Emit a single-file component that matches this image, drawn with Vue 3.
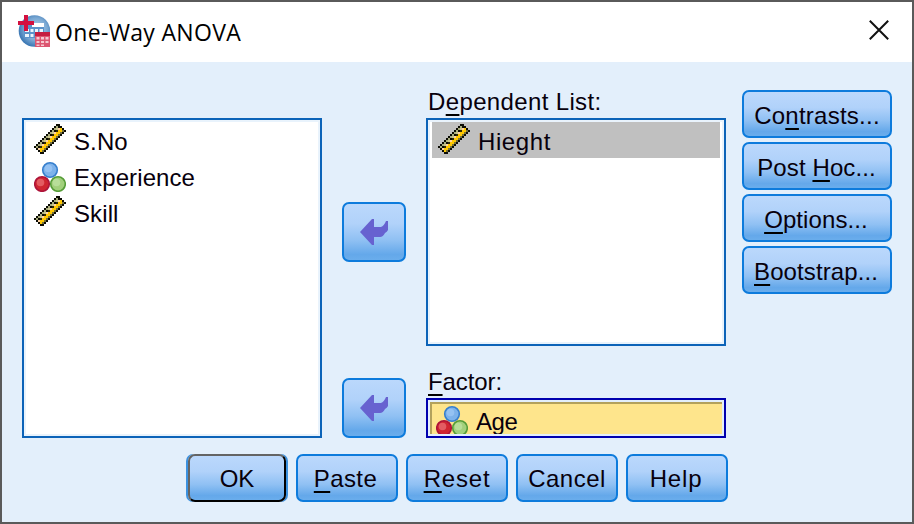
<script setup>
import { h } from 'vue'

const variables = [
  { name: 'S.No', kind: 'scale' },
  { name: 'Experience', kind: 'nominal' },
  { name: 'Skill', kind: 'scale' },
]
const dialogs = [
  { id: 'contrasts', parts: ['Co', 'n', 'trasts...'] },
  { id: 'posthoc', parts: ['Post ', 'H', 'oc...'] },
  { id: 'settings', parts: ['', 'O', 'ptions...'] },
  { id: 'bootstrap', parts: ['', 'B', 'ootstrap...'] },
]
const actions = [
  { id: 'ok', parts: ['OK', '', ''] },
  { id: 'paste', parts: ['', 'P', 'aste'] },
  { id: 'reset', parts: ['', 'R', 'eset'] },
  { id: 'cancel', parts: ['Cancel', '', ''] },
  { id: 'help', parts: ['Help', '', ''] },
]

// Pixel ruler: s runs across its width, d along its length.
const cells = []
for (let y = 0; y < 16; y++) {
  for (let x = 0; x < 16; x++) {
    const s = x + y
    const d = x - y
    if (s < 11 || s > 18 || d < -11 || d > 12) continue
    let fill = '#ffc800'
    if (s === 11 || s === 18 || d <= -11 || d >= 12) fill = '#0c0c04'
    else if (s === 12) fill = '#a9ad7c'
    else if (s === 13) fill = (d + 41) % 4 === 0 ? '#0c0c04' : '#c9c48c'
    else if (s === 17) fill = '#77723c'
    else if (s === 14) fill = (d + 40) % 4 === 0 ? '#2c2808' : '#ffd3a2'
    cells.push({ x, y, fill })
  }
}
const RulerIcon = () =>
  h('svg', { viewBox: '0 0 16 16', width: 32, height: 32, 'shape-rendering': 'crispEdges' },
    cells.map((c) => h('rect', { x: c.x, y: c.y, width: 1, height: 1, fill: c.fill })))

const ball = (cx, cy, fill, stroke, light) => [
  h('circle', { cx, cy, r: 7.3, fill, stroke, 'stroke-width': 1.6 }),
  h('circle', { cx: cx - 1.5, cy: cy - 1.5, r: 3.8, fill: light, opacity: 0.55 }),
]
const BallsIcon = () =>
  h('svg', { viewBox: '0 0 32 32', width: 32, height: 32 }, [
    ...ball(16, 10, '#7db2eb', '#377fcd', '#a9cffa'),
    ...ball(8, 24, '#cf2530', '#ad143a', '#f48a8c'),
    ...ball(24, 24, '#a2d07c', '#569d38', '#cbe9b1'),
  ])
const ArrowIcon = () =>
  h('svg', { viewBox: '0 0 28 26', width: 28, height: 26 }, [
    h('path', { d: 'M0 13 L12 0 H14 V8 H21 Q24 7 26 2 H28 V11 Q27 13 25 14 Q23 18 20 18 H14 V26 H12 Z', fill: '#6762d0' }),
  ])
</script>

<template>
  <div class="window">
    <header class="titlebar">
      <svg class="logo" viewBox="0 0 32 32" width="32" height="32">
        <defs>
          <radialGradient id="globe" cx="55%" cy="45%" r="55%">
            <stop offset="0" stop-color="#b9d7ee" />
            <stop offset="0.65" stop-color="#7aa8d3" />
            <stop offset="1" stop-color="#3d79b5" />
          </radialGradient>
        </defs>
        <circle cx="16.5" cy="16" r="15.8" fill="url(#globe)" />
        <path d="M6 8h20v15H6z" fill="#5b93cb" />
        <path d="M14 8h12v4H14z" fill="#fff" />
        <path d="M7 14h4v3H7zM12.500 14h3v3h-3zM17 14h3v3h-3zM21.500 14h3.500v3h-3.500zM7 19h4v3H7zM12.500 19h3v3h-3z" fill="#e9f4fc" />
        <path d="M6 0h4v6h6v4h-6v6H6v-6H0V6h6z" fill="#d3103f" />
        <path d="M17 17h15v15H17z" fill="#dc5671" />
        <path d="M17 17h15v4H17z" fill="#c51d40" />
        <path d="M18.500 22h3v2.500h-3zM23 22h3v2.500h-3zM27.500 22h3v2.500h-3zM18.500 26h3v2h-3zM23 26h3v2h-3zM27.500 26h3v2h-3zM18.500 29.500h3V31h-3zM23 29.500h3V31h-3z" fill="#f5c9d1" />
      </svg>
      <h1 class="title">One-Way ANOVA</h1>
      <svg class="close" viewBox="0 0 20 20" width="20" height="20">
        <path d="M.8.800 19.200 19.200M19.200.800.800 19.200" stroke="#111" stroke-width="2" />
      </svg>
    </header>

    <main class="content">
      <div class="panes">
        <ul class="box source">
          <li v-for="v in variables" :key="v.name" class="row">
            <RulerIcon v-if="v.kind === 'scale'" class="icon" />
            <BallsIcon v-else class="icon" />
            <span class="name">{{ v.name }}</span>
          </li>
        </ul>

        <div class="movers">
          <button class="btn mover"><ArrowIcon /></button>
          <button class="btn mover"><ArrowIcon /></button>
        </div>

        <div class="targets">
          <div class="label dependent">D<u>e</u>pendent List:</div>
          <ul class="box list">
            <li class="row selected">
              <RulerIcon class="icon" />
              <span class="name hieght">Hieght</span>
            </li>
          </ul>
          <div class="label factor"><u>F</u>actor:</div>
          <div class="factor-box">
            <div class="factor-field">
              <BallsIcon class="icon" />
              <span class="name age">Age</span>
            </div>
          </div>
        </div>

        <div class="dialogs">
          <button v-for="o in dialogs" :key="o.id" class="btn dialog">
            <span class="caption" :class="o.id">{{ o.parts[0] }}<u>{{ o.parts[1] }}</u>{{ o.parts[2] }}</span>
          </button>
        </div>
      </div>

      <footer class="actions">
        <button v-for="a in actions" :key="a.id" class="btn action" :class="{ primary: a.id === 'ok' }">
          <span class="caption" :class="a.id">{{ a.parts[0] }}<u>{{ a.parts[1] }}</u>{{ a.parts[2] }}</span>
        </button>
      </footer>
    </main>
  </div>
</template>

<style>
body {
  margin: 0;
  overflow: hidden;
}
</style>

<style scoped>
.window {
  box-sizing: border-box;
  width: 914px;
  height: 524px;
  border: 2px solid #5a5a5a;
  background: #e3effb;
  color: #08000c;
  font: 24px/28px "Liberation Sans", Arial, sans-serif;
}
.titlebar {
  display: flex;
  box-sizing: border-box;
  height: 60px;
  padding: 13px 23px 0 16px;
  background: #fff;
}
.logo { flex: none; }
.title {
  margin: 1px 0 0 5px;
  font: 400 23px/32px "Open Sans", "Noto Sans", sans-serif;
  letter-spacing: 0.33px;
  color: #000;
  white-space: nowrap;
}
.close {
  margin: 5px 0 0 auto;
}
.content {
  padding: 28px 20px 0;
}
.panes {
  display: flex;
  height: 348px;
}
.box {
  box-sizing: border-box;
  width: 300px;
  margin: 0;
  padding: 2px;
  border: 2px solid #0c63b8;
  background: #fff;
  box-shadow: inset 0 0 0 2px #e9f3fc;
  list-style: none;
}
.source {
  height: 320px;
  margin-top: 28px;
}
.row {
  display: flex;
  align-items: center;
  height: 36px;
  padding-left: 8px;
}
.row .icon, .factor-field .icon { flex: none; }
.row .name { margin: 3px 0 0 8px; letter-spacing: 0.1px; }
.row .hieght { letter-spacing: 0.6px; }
.name, .label, .caption { white-space: nowrap; }
.movers {
  display: flex;
  flex-direction: column;
  justify-content: space-between;
  box-sizing: border-box;
  width: 104px;
  padding: 112px 20px 0;
}
.targets { width: 300px; }
.label {
  height: 28px;
  line-height: 24px;
  padding-left: 2px;
}
.dependent { letter-spacing: 0.36px; }
.list { height: 228px; }
.list .row {
  background: #c0c0c0;
  margin: 0 2px;
  padding-left: 6px;
}
.factor {
  margin-top: 24px;
  letter-spacing: -0.1px;
}
.factor-box {
  box-sizing: border-box;
  height: 40px;
  border: 2px solid #0000ae;
  padding: 2px;
}
.factor-field {
  display: flex;
  align-items: flex-start;
  box-sizing: border-box;
  height: 32px;
  border-top: 2px solid #b3a15c;
  border-left: 2px solid #b3a15c;
  padding-left: 4px;
  overflow: hidden;
  background: #fee58c;
}
.factor-field .name { margin: 4px 0 0 8px; letter-spacing: -0.4px; }
.dialogs {
  display: flex;
  flex-direction: column;
  gap: 4px;
  margin-left: 16px;
}
.btn {
  display: flex;
  align-items: center;
  justify-content: center;
  box-sizing: border-box;
  margin: 0;
  padding: 0;
  border: 2px solid #0d7bdc;
  border-radius: 7px;
  background: linear-gradient(#bbd8fc 0%, #b1d2fa 35%, #8fc0f3 65%, #64a8ea 90%, #6aadec 100%);
  color: inherit;
  font: inherit;
}
.mover { width: 64px; height: 60px; }
.dialog { width: 150px; height: 48px; }
.action { width: 102px; height: 48px; }
.caption { margin-top: 2px; }
.dialog .caption { margin-top: 3px; }
.contrasts { letter-spacing: 0.25px; }
.posthoc { letter-spacing: 0.1px; margin-right: 1px; }
.settings { margin-right: 2px; letter-spacing: 0.1px; }
.bootstrap { letter-spacing: 0.1px; margin-right: 2px; }
.paste { letter-spacing: 0.4px; margin-right: 3px; }
.reset { letter-spacing: 0.8px; }
.cancel { letter-spacing: 0.5px; }
.help { letter-spacing: 0.8px; margin-right: 2px; }
.primary {
  width: 98px;
  margin: 0 2px;
  border-color: #646464 #000 #000 #646464;
  box-shadow: -2px 0 #3b91df, 2px 0 #3b91df;
}
.actions {
  display: flex;
  gap: 8px;
  margin: 16px 0 0 164px;
}
u {
  text-decoration: underline 2px #000;
  text-underline-offset: 4px;
  text-decoration-skip-ink: none;
}
</style>
